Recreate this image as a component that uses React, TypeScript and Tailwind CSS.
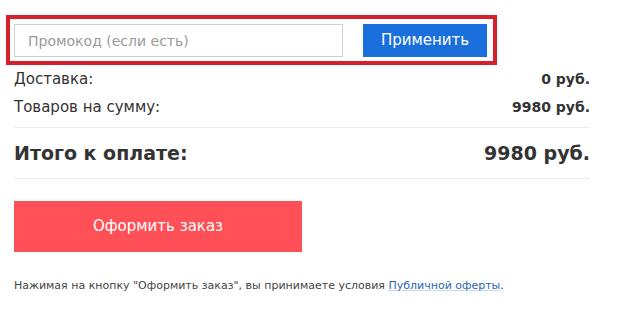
import { useState } from "react";

const font = { fontFamily: '"DejaVu Sans", "Noto Sans", sans-serif' };

export default function App() {
  const [promo, setPromo] = useState("");

  return (
    <div className="min-h-[311px] w-[633px] bg-white text-[#333]" style={font}>
      {/* Promo code form (highlighted) */}
      <div className="pt-[15px] pl-[6px]">
        <div className="flex w-[491px] gap-[20px] border-4 border-[#d7202b] pb-[4px] pl-[4px] pr-[6px] pt-[5px]">
          <input
            value={promo}
            onChange={(e) => setPromo(e.target.value)}
            placeholder="Промокод (если есть)"
            className="h-[33px] w-[329px] border border-[#cfcfcf] px-[13px] text-[14px] text-[#333] outline-none placeholder:text-[#9a9a9a]"
          />
          <button
            type="button"
            className="h-[33px] w-[124px] bg-[#1b6fdc] text-[15px] text-white"
          >
            Применить
          </button>
        </div>
      </div>

      <div className="w-[590px] pl-[14px]">
        {/* Summary rows */}
        <div className="text-[15px] leading-[28px]">
          <div className="flex justify-between">
            <span>Доставка:</span>
            <span className="text-[14px] font-bold">0 руб.</span>
          </div>
          <div className="flex justify-between">
            <span>Товаров на сумму:</span>
            <span className="text-[14px] font-bold">9980 руб.</span>
          </div>
        </div>

        {/* Total */}
        <div className="mt-[6px] flex h-[52px] items-center justify-between border-y border-[#ececec] text-[19px] font-bold">
          <span>Итого к оплате:</span>
          <span>9980 руб.</span>
        </div>

        <button
          type="button"
          className="mt-[22px] h-[51px] w-[288px] bg-[#ff4f57] text-[15px] text-white"
        >
          Оформить заказ
        </button>

        <p className="mt-[26px] text-[11px] text-[#444]">
          Нажимая на кнопку "Оформить заказ", вы принимаете условия{" "}
          <a href="#" className="text-[#2867b2] underline decoration-[#c9d9ee]">
            Публичной оферты
          </a>
          .
        </p>
      </div>
    </div>
  );
}
